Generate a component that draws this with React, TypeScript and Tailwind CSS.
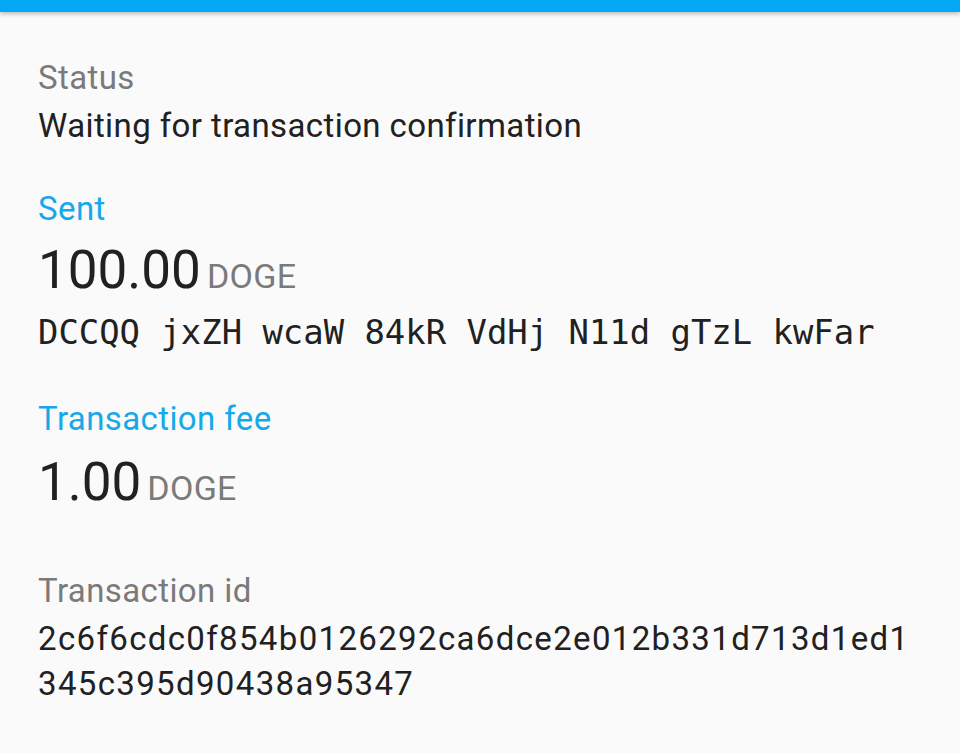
import React from "react";

const sans = { fontFamily: "Roboto, 'Noto Sans', sans-serif" };

function Label({ children, accent }: { children: React.ReactNode; accent?: boolean }) {
  return (
    <div
      className={`text-[33px] leading-[48px] tracking-[0.4px] ${
        accent ? "text-[#16a9ea]" : "text-[#7a7a7a]"
      }`}
    >
      {children}
    </div>
  );
}

function Amount({ value }: { value: string }) {
  return (
    <div className="flex h-[60px] items-baseline gap-[6px]">
      <span className="text-[53px] leading-[60px] text-[#212121]">{value}</span>
      <span className="text-[34px] leading-none tracking-[0.3px] text-[#7a7a7a]">DOGE</span>
    </div>
  );
}

export default function App() {
  return (
    <div className="min-h-[753px] w-[960px] bg-[#fafafa]" style={sans}>
      <div className="h-[12px] bg-[#03a9f4] shadow-[0_2px_4px_rgba(0,0,0,0.25)]" />

      <div className="flex flex-col px-[38px] pt-[41.7px]">
        <Label>Status</Label>
        <div className="text-[33px] leading-[48px] tracking-[0.4px] text-[#212121]">
          Waiting for transaction confirmation
        </div>

        <div className="mt-[35px]">
          <Label accent>Sent</Label>
        </div>
        <div className="mt-[7.5px]">
          <Amount value="100.00" />
        </div>
        <div
          className="mt-[8.5px] text-[33.9px] leading-[48px] text-[#212121]"
          style={{ fontFamily: "'DejaVu Sans Mono', monospace" }}
        >
          DCCQQ jxZH wcaW 84kR VdHj N11d gTzL kwFar
        </div>

        <div className="mt-[38.5px]">
          <Label accent>Transaction fee</Label>
        </div>
        <div className="mt-[8.5px]">
          <Amount value="1.00" />
        </div>

        <div className="mt-[55.5px]">
          <Label>Transaction id</Label>
        </div>
        <div className="mt-[1px] text-[33px] leading-[45px] tracking-[1.35px] text-[#212121]">
          2c6f6cdc0f854b0126292ca6dce2e012b331d713d1ed1
          <br />
          345c395d90438a95347
        </div>
      </div>
    </div>
  );
}
